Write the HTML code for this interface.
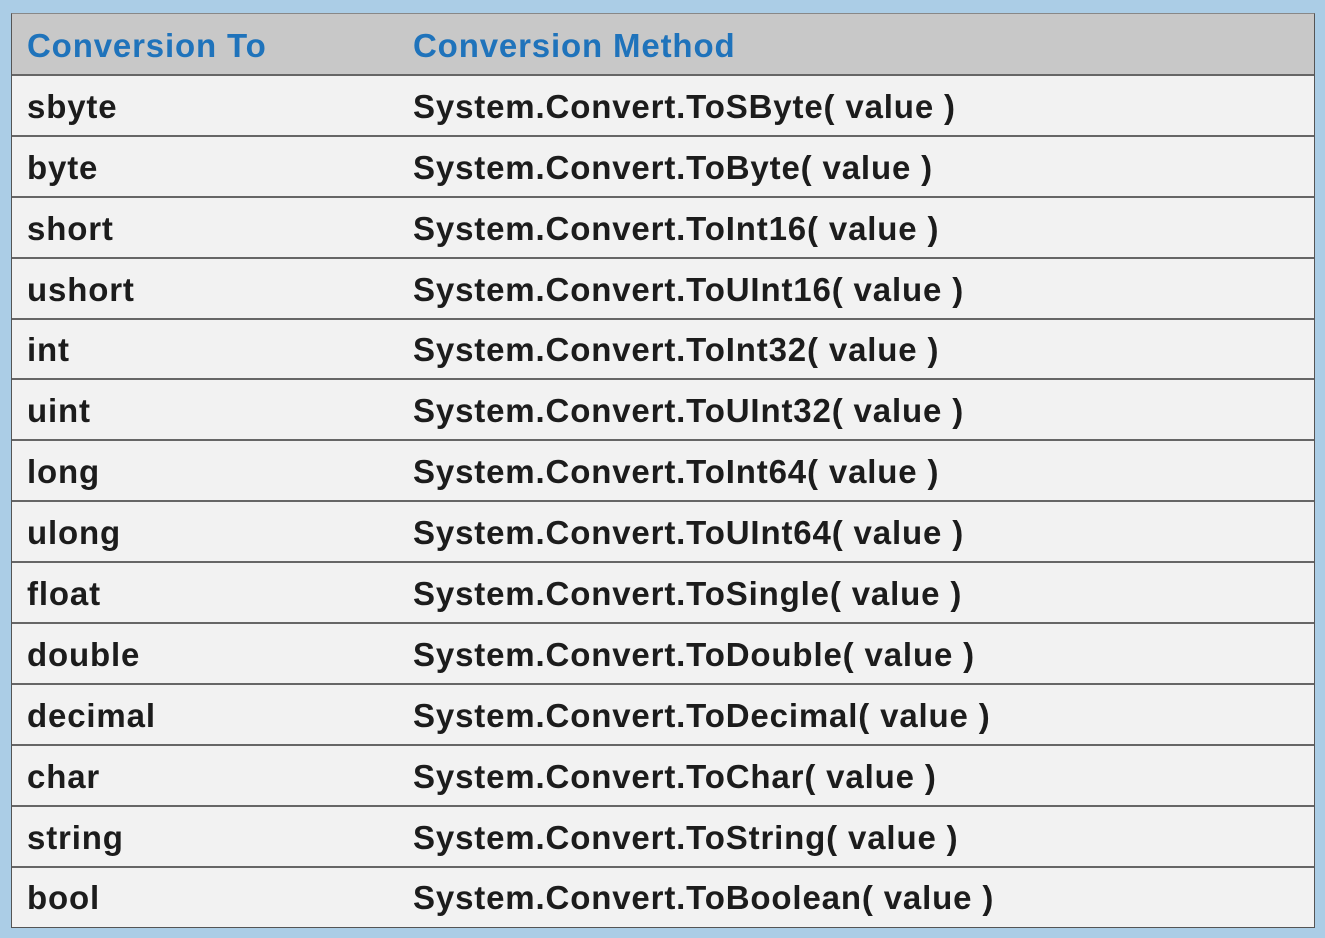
<!DOCTYPE html>
<html><head><style>
html,body{margin:0;padding:0;}
body{width:1325px;height:938px;background:#abcde6;position:relative;overflow:hidden;font-family:"Liberation Sans",sans-serif;}
.t{position:absolute;left:11px;top:13px;width:1302px;height:913px;background:#f2f2f2;border:1px solid #555;border-top-color:#888;}
.h{position:absolute;left:0;top:0;width:100%;height:60px;background:#c8c8c8;border-bottom:2px solid #666;}
.r{position:absolute;left:0;width:100%;border-bottom:2px solid #666;height:59px;}
.c{position:absolute;top:0;line-height:62px;font-size:33px;letter-spacing:0.85px;font-weight:bold;color:#1c1c1c;white-space:nowrap;}
.a{left:15px}.b{left:401px}
.h .c{color:#1f73bb;line-height:64px;}
</style></head><body>
<div class="t">
<div class="h"><div class="c a">Conversion To</div><div class="c b">Conversion Method</div></div>
<div class="r" style="top:62px"><div class="c a">sbyte</div><div class="c b">System.Convert.ToSByte( value )</div></div>
<div class="r" style="top:123px"><div class="c a">byte</div><div class="c b">System.Convert.ToByte( value )</div></div>
<div class="r" style="top:184px"><div class="c a">short</div><div class="c b">System.Convert.ToInt16( value )</div></div>
<div class="r" style="top:245px"><div class="c a">ushort</div><div class="c b">System.Convert.ToUInt16( value )</div></div>
<div class="r" style="top:305px"><div class="c a">int</div><div class="c b">System.Convert.ToInt32( value )</div></div>
<div class="r" style="top:366px"><div class="c a">uint</div><div class="c b">System.Convert.ToUInt32( value )</div></div>
<div class="r" style="top:427px"><div class="c a">long</div><div class="c b">System.Convert.ToInt64( value )</div></div>
<div class="r" style="top:488px"><div class="c a">ulong</div><div class="c b">System.Convert.ToUInt64( value )</div></div>
<div class="r" style="top:549px"><div class="c a">float</div><div class="c b">System.Convert.ToSingle( value )</div></div>
<div class="r" style="top:610px"><div class="c a">double</div><div class="c b">System.Convert.ToDouble( value )</div></div>
<div class="r" style="top:671px"><div class="c a">decimal</div><div class="c b">System.Convert.ToDecimal( value )</div></div>
<div class="r" style="top:732px"><div class="c a">char</div><div class="c b">System.Convert.ToChar( value )</div></div>
<div class="r" style="top:793px"><div class="c a">string</div><div class="c b">System.Convert.ToString( value )</div></div>
<div class="r" style="top:853px;border-bottom:none"><div class="c a">bool</div><div class="c b">System.Convert.ToBoolean( value )</div></div>
</div>
</body></html>
